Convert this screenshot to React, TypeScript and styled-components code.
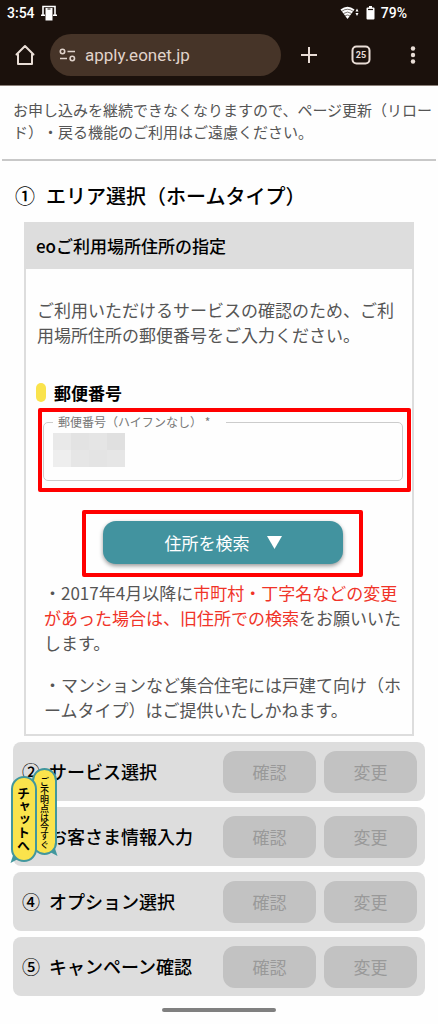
import React from "react";
import styled, { createGlobalStyle } from "styled-components";

const Global = createGlobalStyle`
  * { box-sizing: border-box; }
  body {
    margin: 0;
    background: #fefefe;
    color: #555;
    font-family: "Noto Sans CJK JP", sans-serif;
    font-size: 17px;
    line-height: 25px;
    text-spacing-trim: space-all;
  }
  h1, h2, h3, p { margin: 0; }
  button, input { font-family: inherit; }
`;

const Page = styled.div`
  position: relative;
  display: flex;
  flex-direction: column;
`;

const Chrome = styled.header`
  background: #1b110c;
  color: #e9ddd6;
  border-bottom: 1px solid #8a7f78;
  font-family: Roboto, sans-serif;
`;

const StatusBar = styled.div`
  display: flex;
  align-items: center;
  height: 26px;
  padding: 0 31px 0 7px;
  color: #fff;
  font-size: 14px;
  font-weight: 500;
`;

const StatusGroup = styled.div<{ $end?: boolean }>`
  display: flex;
  align-items: center;
  gap: 6px;
  margin-left: ${(p) => (p.$end ? "auto" : "0")};
`;

const Toolbar = styled.div`
  display: flex;
  align-items: center;
  height: 59px;
  padding: 0 13px 2px;
`;

const ToolButton = styled.button`
  display: flex;
  align-items: center;
  justify-content: center;
  width: 24px;
  height: 24px;
  flex: none;
  padding: 0;
  border: 0;
  background: none;
  color: inherit;
`;

const ToolGroup = styled.div`
  display: flex;
  gap: 28px;
  margin-left: 16px;
`;

const UrlPill = styled.label`
  display: flex;
  align-items: center;
  flex: 1;
  min-width: 0;
  height: 42px;
  margin-left: 13px;
  padding: 0 9px;
  gap: 9px;
  border-radius: 21px;
  background: #463428;
`;

const UrlInput = styled.input`
  flex: 1;
  min-width: 0;
  padding: 0;
  border: 0;
  outline: 0;
  background: none;
  color: #e0d3cb;
  font-size: 17px;
  line-height: 24px;
`;

const Notice = styled.p`
  margin: 13px 2px 0;
  padding: 0 2px 16px 11px;
  border-bottom: 2px solid #c8c8c8;
  font-size: 15px;
  line-height: 22px;
`;

const SectionTitle = styled.h1`
  display: flex;
  gap: 11px;
  padding: 20px 15px 11px;
  color: #000;
  font-size: 20px;
  font-weight: 500;
  line-height: 30px;
`;

const Card = styled.section`
  margin: 0 24px;
  border: 2px solid #ddd;
`;

const CardTitle = styled.h2`
  padding: 9px 10px 11px;
  background: #ddd;
  color: #000;
  font-size: 17px;
  font-weight: 500;
  line-height: 25px;
`;

const Intro = styled.p`
  padding: 28px 10px 0 11px;
`;

const FieldTitle = styled.h3`
  display: flex;
  align-items: center;
  gap: 8px;
  margin-top: 33px;
  padding-left: 10px;
  color: #000;
  font-size: 17px;
  font-weight: 700;

  &::before {
    content: "";
    width: 10px;
    height: 19px;
    border-radius: 5px;
    background: #fae34c;
  }
`;

const FieldFrame = styled.div`
  margin: 3px 1px 0 12px;
  padding: 1px 4px 7px 1px;
  border: 4px solid #f00;
  border-radius: 2px;
`;

const Fieldset = styled.fieldset`
  position: relative;
  margin: 0;
  padding: 0 9px 11px;
  border: 1px solid #ccc;
  border-radius: 5px;
`;

const Legend = styled.legend`
  padding: 0 16px 0 5px;
  color: #777;
  font-size: 12px;
  line-height: 18px;
`;

const ZipInput = styled.input`
  display: block;
  width: 100%;
  height: 38px;
  padding: 0;
  border: 0;
  outline: 0;
  background: none;
  font-size: 17px;
`;

const Mosaic = styled.div`
  position: absolute;
  top: 2px;
  left: 9px;
  display: grid;
  grid-template-columns: repeat(4, 18px);
  grid-auto-rows: 17px;
`;

const Tile = styled.span<{ $tone: string }>`
  background: ${(p) => p.$tone};
`;

const SearchFrame = styled.div`
  width: 281px;
  margin: 18px auto 0 56px;
  padding: 7px 16px 9px 17px;
  border: 4px solid #f00;
  border-radius: 2px;
`;

const SearchButton = styled.button`
  display: flex;
  align-items: center;
  justify-content: center;
  gap: 17px;
  width: 100%;
  height: 43px;
  border: 0;
  border-radius: 13px;
  background: #42939f;
  color: #fff;
  box-shadow: 0 2px 4px rgba(0, 0, 0, 0.4);
  font-size: 17px;
`;

const Notes = styled.div`
  display: flex;
  flex-direction: column;
  gap: 17px;
  padding: 3px 4px 12px 18px;
`;

const Alert = styled.span`
  color: #f03328;
`;

const Steps = styled.ol`
  display: flex;
  flex-direction: column;
  gap: 6px;
  margin: 6px 13px 0;
  padding: 0;
  list-style: none;
`;

const Step = styled.li`
  display: flex;
  align-items: center;
  gap: 8px;
  height: 59px;
  padding: 0 8px 0 9px;
  border-radius: 8px;
  background: #ddd;
`;

const StepTitle = styled.h2`
  display: flex;
  gap: 9px;
  flex: 1;
  color: #000;
  font-size: 18px;
  font-weight: 500;
  white-space: nowrap;
`;

const StepButton = styled.button`
  width: 93px;
  height: 42px;
  flex: none;
  padding: 0;
  border: 0;
  border-radius: 12px;
  background: #c2c2c2;
  color: #999;
  font-size: 17px;
`;

const HomeBar = styled.div`
  width: 114px;
  height: 4px;
  margin: 12px auto;
  border-radius: 2px;
  background: #808080;
`;

const ChatButton = styled.button`
  position: absolute;
  top: 768px;
  left: 10px;
  width: 48px;
  height: 95px;
  padding: 0;
  border: 0;
  background: none;
  color: #000;
`;

const ChatShape = styled.svg`
  display: block;
`;

const ChatText = styled.span<{ $main?: boolean }>`
  position: absolute;
  top: ${(p) => (p.$main ? "19px" : "9px")};
  left: ${(p) => (p.$main ? "3px" : "24px")};
  width: 20px;
  line-height: 20px;
  writing-mode: vertical-rl;
  white-space: nowrap;
  font-size: ${(p) => (p.$main ? "13px" : "9px")};
  font-weight: ${(p) => (p.$main ? 700 : 500)};
`;

const tiles = ["#e9e9e9", "#e3e3e3", "#e5e5e5", "#e0e0e0", "#eee", "#e6e6e6", "#e4e4e4", "#e6e6e6"];

const steps = [
  { mark: "②", name: "サービス選択" },
  { mark: "③", name: "お客さま情報入力" },
  { mark: "④", name: "オプション選択" },
  { mark: "⑤", name: "キャンペーン確認" },
];

const CastIcon = () => (
  <svg width="16" height="16" viewBox="0 0 16 16" aria-hidden="true">
    <path d="M2 10V1.500h12V10" fill="none" stroke="#fff" strokeWidth="1.600" />
    <path d="M0 9.500h4V11H0zM12 9.500h4V11h-4z" fill="#fff" />
    <path d="M4.500 3h7v12.500h-7z" fill="#fff" />
    <path d="M6.500 4h3" stroke="#1b110c" />
  </svg>
);

const WifiIcon = () => (
  <svg width="20" height="14" viewBox="0 0 20 14" aria-hidden="true">
    <path d="M0.500 3.500Q7.500-2 14.500 3.500L7.500 13z" fill="#fff" />
    <path d="M1.800 5.300Q7.500 1.200 13.200 5.300M3.500 7.500Q7.500 4.600 11.500 7.500M5.200 9.700Q7.500 8.300 9.800 9.700" fill="none" stroke="#1b110c" strokeWidth="0.600" />
    <path d="M15.500 5.500l1.500-3 1.500 3zM15.500 7h3L17 10z" fill="#fff" />
  </svg>
);

const BatteryIcon = () => (
  <svg width="9" height="14" viewBox="0 0 9 14" aria-hidden="true">
    <path d="M3 0h3v1.500h1.500q1 0 1 1v10q0 1-1 1h-6q-1 0-1-1v-10q0-1 1-1H3z" fill="#fff" />
    <path d="M2 3.500h5" stroke="#1b110c" strokeWidth="1.200" />
  </svg>
);

const App = () => (
  <Page>
    <Global />
    <Chrome>
      <StatusBar>
        <StatusGroup>
          <span>3:54</span>
          <CastIcon />
        </StatusGroup>
        <StatusGroup $end>
          <WifiIcon />
          <BatteryIcon />
          <span>79%</span>
        </StatusGroup>
      </StatusBar>
      <Toolbar>
        <ToolButton aria-label="ホーム">
          <svg width="22" height="22" viewBox="0 0 22 22" fill="none" stroke="currentColor" strokeWidth="2" strokeLinejoin="round">
            <path d="M2.500 10.500L11 2l8.500 8.500H18V20H4v-9.500z" />
          </svg>
        </ToolButton>
        <UrlPill>
          <svg width="17" height="14" viewBox="0 0 17 14" fill="none" stroke="#e0d3cb" strokeWidth="1.600" aria-hidden="true">
            <circle cx="3.500" cy="3.500" r="2.200" />
            <path d="M8.500 3.500H16M1 10.500h7" />
            <circle cx="13.300" cy="10.500" r="2.200" />
          </svg>
          <UrlInput aria-label="URL" defaultValue="apply.eonet.jp" />
        </UrlPill>
        <ToolGroup>
          <ToolButton aria-label="新しいタブ">
            <svg width="18" height="18" viewBox="0 0 18 18" stroke="currentColor" strokeWidth="2">
              <path d="M9 1v16M1 9h16" />
            </svg>
          </ToolButton>
          <ToolButton aria-label="タブ一覧">
            <svg width="20" height="20" viewBox="0 0 20 20">
              <rect x="1.500" y="1.500" width="17" height="17" rx="4" fill="none" stroke="currentColor" strokeWidth="2" />
              <text x="10" y="13" textAnchor="middle" fontSize="9" fontWeight="700" fill="currentColor">25</text>
            </svg>
          </ToolButton>
          <ToolButton aria-label="メニュー">
            <svg width="6" height="18" viewBox="0 0 6 18" fill="currentColor">
              <circle cx="3" cy="2.500" r="2.200" />
              <circle cx="3" cy="9" r="2.200" />
              <circle cx="3" cy="15.500" r="2.200" />
            </svg>
          </ToolButton>
        </ToolGroup>
      </Toolbar>
    </Chrome>

    <Notice>お申し込みを継続できなくなりますので、ページ更新（リロード）・戻る機能のご利用はご遠慮ください。</Notice>

    <SectionTitle>
      <span>①</span>
      <span>エリア選択（ホームタイプ）</span>
    </SectionTitle>

    <Card>
      <CardTitle>eoご利用場所住所の指定</CardTitle>
      <Intro>ご利用いただけるサービスの確認のため、ご利用場所住所の郵便番号をご入力ください。</Intro>
      <FieldTitle>郵便番号</FieldTitle>
      <FieldFrame>
        <Fieldset>
          <Legend>
            <label htmlFor="zip">郵便番号（ハイフンなし） *</label>
          </Legend>
          <ZipInput id="zip" inputMode="numeric" required />
          <Mosaic>
            {tiles.map((tone, i) => (
              <Tile key={i} $tone={tone} />
            ))}
          </Mosaic>
        </Fieldset>
      </FieldFrame>
      <SearchFrame>
        <SearchButton>
          <span>住所を検索</span>
          <svg width="15" height="13" viewBox="0 0 15 13" fill="#fff" aria-hidden="true">
            <path d="M0 0h15L7.500 13z" />
          </svg>
        </SearchButton>
      </SearchFrame>
      <Notes>
        <p>
          ・2017年4月以降に<Alert>市町村・丁字名などの変更があった場合は、旧住所での検索</Alert>をお願いいたします。
        </p>
        <p>・マンションなど集合住宅には戸建て向け（ホームタイプ）はご提供いたしかねます。</p>
      </Notes>
    </Card>

    <Steps>
      {steps.map((s) => (
        <Step key={s.mark}>
          <StepTitle>
            <span>{s.mark}</span>
            <span>{s.name}</span>
          </StepTitle>
          <StepButton disabled>確認</StepButton>
          <StepButton disabled>変更</StepButton>
        </Step>
      ))}
    </Steps>
    <HomeBar />

    <ChatButton>
      <ChatShape width="48" height="95" viewBox="0 0 48 95" aria-hidden="true">
        <path d="M40 84l7.500 4-3-9z" fill="#42979d" />
        <rect x="23" y="1" width="23" height="85" rx="11.500" fill="#fae34c" stroke="#42979d" strokeWidth="2" />
        <path d="M8 91l-7.500 4 3-9z" fill="#42979d" />
        <rect x="2" y="9" width="24" height="84" rx="12" fill="#fae34c" stroke="#42979d" strokeWidth="2" />
      </ChatShape>
      <ChatText>ご不明点は今すぐ</ChatText>
      <ChatText $main>チャットへ</ChatText>
    </ChatButton>
  </Page>
);

export default App;
